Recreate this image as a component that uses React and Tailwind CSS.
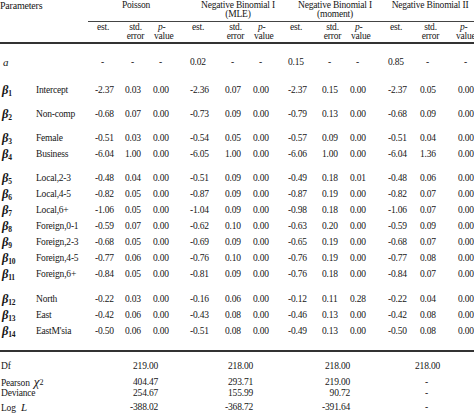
import React from "react";

const cols = "grid grid-cols-[36px_59px_30px_28px_37px_35px_28px_35px_34px_28px_38px_32px_38px_1fr]";

const rows = [
  { sub: "1", name: "Intercept", v: ["-2.37","0.03","0.00","-2.36","0.07","0.00","-2.37","0.15","0.00","-2.37","0.05","0.00"], cls: "mt-[11px]" },
  { sub: "2", name: "Non-comp", v: ["-0.68","0.07","0.00","-0.73","0.09","0.00","-0.79","0.13","0.00","-0.68","0.09","0.00"], cls: "mt-[8px]" },
  { sub: "3", name: "Female", v: ["-0.51","0.03","0.00","-0.54","0.05","0.00","-0.57","0.09","0.00","-0.51","0.04","0.00"], cls: "mt-[8px]" },
  { sub: "4", name: "Business", v: ["-6.04","1.00","0.00","-6.05","1.00","0.00","-6.06","1.00","0.00","-6.04","1.36","0.00"], cls: "" },
  { sub: "5", name: "Local,2-3", v: ["-0.48","0.04","0.00","-0.51","0.09","0.00","-0.49","0.18","0.01","-0.48","0.06","0.00"], cls: "mt-[8px]" },
  { sub: "6", name: "Local,4-5", v: ["-0.82","0.05","0.00","-0.87","0.09","0.00","-0.87","0.19","0.00","-0.82","0.07","0.00"], cls: "" },
  { sub: "7", name: "Local,6+", v: ["-1.06","0.05","0.00","-1.04","0.09","0.00","-0.98","0.18","0.00","-1.06","0.07","0.00"], cls: "" },
  { sub: "8", name: "Foreign,0-1", v: ["-0.59","0.07","0.00","-0.62","0.10","0.00","-0.63","0.20","0.00","-0.59","0.09","0.00"], cls: "" },
  { sub: "9", name: "Foreign,2-3", v: ["-0.68","0.05","0.00","-0.69","0.09","0.00","-0.65","0.19","0.00","-0.68","0.07","0.00"], cls: "" },
  { sub: "10", name: "Foreign,4-5", v: ["-0.77","0.06","0.00","-0.76","0.10","0.00","-0.76","0.19","0.00","-0.77","0.08","0.00"], cls: "" },
  { sub: "11", name: "Foreign,6+", v: ["-0.84","0.05","0.00","-0.81","0.09","0.00","-0.76","0.18","0.00","-0.84","0.07","0.00"], cls: "" },
  { sub: "12", name: "North", v: ["-0.22","0.03","0.00","-0.16","0.06","0.00","-0.12","0.11","0.28","-0.22","0.04","0.00"], cls: "mt-[9px]" },
  { sub: "13", name: "East", v: ["-0.42","0.06","0.00","-0.43","0.08","0.00","-0.46","0.13","0.00","-0.42","0.08","0.00"], cls: "" },
  { sub: "14", name: "EastM'sia", v: ["-0.50","0.06","0.00","-0.51","0.08","0.00","-0.49","0.13","0.00","-0.50","0.08","0.00"], cls: "" },
];

function Beta({ sub }) {
  return (
    <span className="pl-[2px] whitespace-nowrap">
      <span className="italic font-bold text-[12.5px]">β</span>
      <sub className="text-[7.5px] font-bold align-baseline relative top-[2px]">{sub}</sub>
    </span>
  );
}

function DataRow({ left, name, v, cls }) {
  return (
    <div className={`${cols} h-[16px] items-center ${cls}`}>
      <div>{left}</div>
      <div>{name}</div>
      {v.map((x, i) => (
        <div key={i} className={x === "-" ? "pl-[6px]" : ""}>{x}</div>
      ))}
      <div />
    </div>
  );
}

const summary = [
  { label: <span>Df</span>, v: ["219.00", "218.00", "218.00", "218.00"] },
  { label: <span>Pearson <span className="italic text-[13px] pl-[2px]">χ</span><sup className="text-[8px] relative -top-[1px]">2</sup></span>, v: ["404.47", "293.71", "219.00", "-"] },
  { label: <span>Deviance</span>, v: ["254.67", "155.99", "90.72", "-"] },
  { label: <span>Log <span className="italic text-[11px] pl-[3px]">L</span></span>, v: ["-388.02", "-368.72", "-391.64", "-"] },
];

export default function App() {
  return (
    <div
      className="w-[474px] h-[415px] overflow-hidden bg-white text-[#161616] text-[9.5px] tracking-[-0.2px]"
      style={{ fontFamily: '"Liberation Serif", "Times New Roman", serif' }}
    >
      {/* group header */}
      <div className="flex h-[22px]">
        <div className="w-[88px] pt-[1px] leading-[9px] text-[10px]">Parameters</div>
        <div className="flex-1 border-b border-[#444] grid grid-cols-[98px_104px_90px_1fr] pt-[1px] leading-[9px]">
          <div className="text-center pr-[2px]">Poisson</div>
          <div className="text-center whitespace-nowrap">
            <div>Negative Binomial I</div>
            <div>(MLE)</div>
          </div>
          <div className="text-center whitespace-nowrap">
            <div>Negative Binomial I</div>
            <div>(moment)</div>
          </div>
          <div className="text-center whitespace-nowrap pl-[6px]">Negative Binomial II</div>
        </div>
      </div>
      {/* sub header */}
      <div className={`${cols} h-[20px] pt-[1px] leading-[9px]`}>
        <div />
        <div />
        {[0, 1, 2, 3].map((g) => (
          <React.Fragment key={g}>
            <div className="pl-[2px]">est.</div>
            <div className="text-center w-[20px] pl-[1px]">
              <div>std.</div>
              <div>error</div>
            </div>
            <div className={g === 3 ? "-ml-[2px]" : "pl-[1px]"}>
              <div className="pl-[4px] italic">p-</div>
              <div>value</div>
            </div>
          </React.Fragment>
        ))}
        <div />
      </div>
      <div className="h-[2px] bg-[#333]" />

      <DataRow
        left={<span className="italic text-[11px] pl-[3px]">a</span>}
        name=""
        v={["-", "-", "-", "0.02", "-", "-", "0.15", "-", "-", "0.85", "-", "-"]}
        cls="mt-[10px]"
      />
      {rows.map((r, i) => (
        <DataRow key={i} left={<Beta sub={r.sub} />} name={r.name} v={r.v} cls={r.cls} />
      ))}

      <div className="h-[2px] bg-[#333] mt-[12px]" />

      <div className="flex flex-col mt-[7px]">
        {summary.map((s, i) => (
          <div key={i} className="grid grid-cols-[110px_48px_95px_97px_90px_1fr] h-[13.3px] items-center">
            <div className="pl-[1px] whitespace-nowrap">{s.label}</div>
            {s.v.map((x, j) => (
              <div key={j} className={x === "-" ? "text-right pr-[12px]" : "text-right"}>{x}</div>
            ))}
            <div />
          </div>
        ))}
      </div>
    </div>
  );
}
